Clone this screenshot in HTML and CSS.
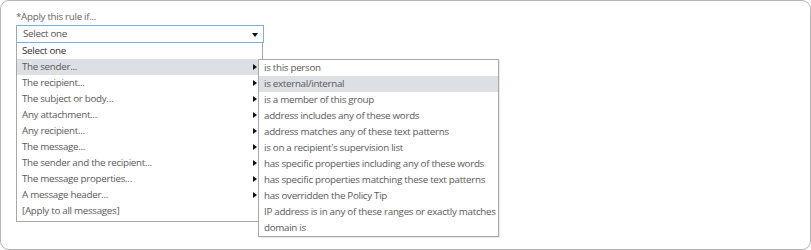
FILE: index.html
```html
<!DOCTYPE html>
<html>
<head>
<meta charset="utf-8">
<link rel="stylesheet" href="styles.css">
</head>
<body>
<div class="frame">
  <div class="label">*Apply this rule if...</div>
  <div class="select-wrap">
    <div class="select">Select one<span class="caret"></span></div>
    <ul class="dropdown">
      <li class="opt first">Select one</li>
      <li class="opt sub active">The sender...
        <ul class="submenu">
          <li class="opt">is this person</li>
          <li class="opt active">is external/internal</li>
          <li class="opt">is a member of this group</li>
          <li class="opt">address includes any of these words</li>
          <li class="opt">address matches any of these text patterns</li>
          <li class="opt">is on a recipient's supervision list</li>
          <li class="opt">has specific properties including any of these words</li>
          <li class="opt">has specific properties matching these text patterns</li>
          <li class="opt">has overridden the Policy Tip</li>
          <li class="opt">IP address is in any of these ranges or exactly matches</li>
          <li class="opt">domain is</li>
        </ul>
      </li>
      <li class="opt sub">The recipient...</li>
      <li class="opt sub">The subject or body...</li>
      <li class="opt sub">Any attachment...</li>
      <li class="opt sub">Any recipient...</li>
      <li class="opt sub">The message...</li>
      <li class="opt sub">The sender and the recipient...</li>
      <li class="opt sub">The message properties...</li>
      <li class="opt sub">A message header...</li>
      <li class="opt">[Apply to all messages]</li>
    </ul>
  </div>
</div>
</body>
</html>
```
FILE: styles.css
```css
html, body {
  margin: 0;
  padding: 0;
  background: #ffffff;
}
body {
  font-family: "Open Sans", "Noto Sans", sans-serif;
  font-size: 9.8px;
  letter-spacing: -0.3px;
  color: #5a5a5a;
}
.frame {
  box-sizing: border-box;
  width: 811px;
  height: 250px;
  border: 1px solid #b5b5b5;
  border-radius: 9px;
  padding: 8px 15px 0;
}
.label {
  line-height: 16px;
  color: #666666;
}
.select-wrap {
  position: relative;
  width: 248px;
}
.select {
  box-sizing: border-box;
  height: 18px;
  border: 1px solid #82ace0;
  padding-left: 6px;
  padding-right: 5px;
  line-height: 16px;
  color: #555555;
  display: flex;
  align-items: center;
  justify-content: space-between;
}
.caret {
  width: 0;
  height: 0;
  border-left: 3.5px solid transparent;
  border-right: 3.5px solid transparent;
  border-top: 4px solid #111111;
  margin-top: 1px;
}
.dropdown {
  position: absolute;
  top: 18px;
  left: 0;
  width: 247px;
  box-sizing: border-box;
  margin: 0;
  padding: 0 0 2px;
  list-style: none;
  border: 1px solid #a8a8a8;
  border-top: none;
  background: #ffffff;
}
.dropdown li, .submenu li {
  list-style: none;
}
.opt {
  position: relative;
  height: 16px;
  line-height: 16px;
  padding-left: 5px;
  white-space: nowrap;
}
.opt.first {
  color: #333333;
}
.opt.active {
  background: #dcdfe4;
}
.sub::after {
  content: "";
  position: absolute;
  right: 5px;
  top: 4.5px;
  width: 0;
  height: 0;
  border-top: 3.5px solid transparent;
  border-bottom: 3.5px solid transparent;
  border-left: 4px solid #111111;
}
.submenu {
  position: absolute;
  top: 0;
  left: 241px;
  width: 241px;
  box-sizing: border-box;
  margin: 0;
  padding: 0;
  border: 1px solid #a9a9a9;
  background: #ffffff;
  box-shadow: 1px 1px 1px rgba(0, 0, 0, 0.08);
  z-index: 2;
}
.submenu .opt {
  padding-left: 5px;
}
```
